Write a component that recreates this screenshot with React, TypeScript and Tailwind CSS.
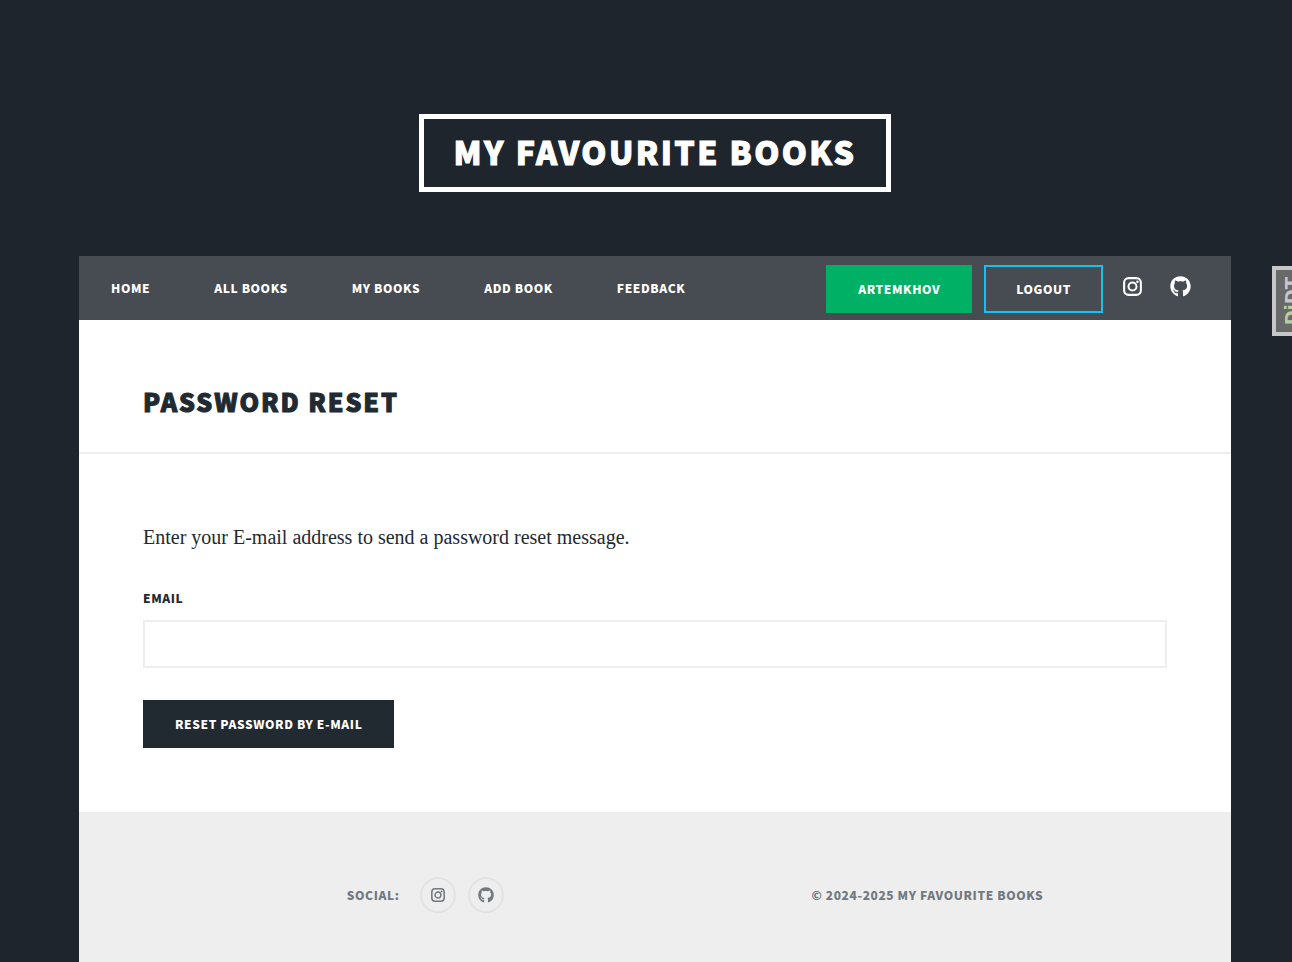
import { FaGithub } from "react-icons/fa";

const face = "font-['Noto_Sans_CJK_SC',sans-serif] font-black uppercase";
const heading = `${face} tracking-[0.075em] [-webkit-text-stroke:1px_currentColor]`;
const small = `${face} text-[12px] tracking-[0.05em]`;

const links = ["Home", "All books", "My books", "Add book", "Feedback"];

function Instagram({ className }: { className: string }) {
  return (
    <svg viewBox="0 0 20 20" className={className} fill="none" stroke="currentColor" aria-hidden="true">
      <rect x="1.2" y="1.2" width="17.6" height="17.6" rx="4.6" strokeWidth="2.2" />
      <circle cx="10" cy="10" r="4.2" strokeWidth="2.1" />
      <circle cx="15.2" cy="4.9" r="1.3" fill="currentColor" stroke="none" />
    </svg>
  );
}

export default function App() {
  return (
    <div className="relative min-h-screen overflow-x-hidden bg-[#1e252d] pr-[61px] pl-[79px] font-['Liberation_Serif',serif] text-[#212931]">
      <header className="flex justify-center pt-[114px] pb-16">
        <a
          href="#"
          className={`${heading} flex h-[78px] items-center border-[5px] border-white px-[30px] pb-1 text-[32px] leading-none text-white`}
        >
          My favourite books
        </a>
      </header>

      <nav className="flex h-16 items-center justify-between bg-[#474b52] text-white" aria-label="Main">
        <ul className="flex">
          {links.map((link) => (
            <li key={link}>
              <a href="#" className={`${small} block px-8 leading-16`}>
                {link}
              </a>
            </li>
          ))}
        </ul>
        <div className="flex items-center gap-3 pt-0.5 pr-10">
          <a href="#" className={`${small} flex h-12 items-center bg-[#00b064] px-8`}>
            ArtemKhov
          </a>
          <button type="button" className={`${small} h-12 border-2 border-[#18bfef] px-[30px]`}>
            Logout
          </button>
          <div className="flex items-center gap-7 pb-1.5 pl-2">
            <a href="#" aria-label="Instagram">
              <Instagram className="size-[19px]" />
            </a>
            <a href="#" aria-label="GitHub">
              <FaGithub size={21} />
            </a>
          </div>
        </div>
      </nav>

      <main className="bg-white">
        <div className="border-b-2 border-[#eeeeee] px-16 pt-[63px] pb-[33px]">
          <h1 className={`${heading} text-[25px] leading-9`}>Password reset</h1>
        </div>
        <form className="px-16 pt-16 pb-16" onSubmit={(event) => event.preventDefault()}>
          <p className="text-[20px] leading-[38px]">Enter your E-mail address to send a password reset message.</p>
          <label htmlFor="email" className={`${small} mt-[30px] block leading-6`}>
            Email
          </label>
          <input
            id="email"
            type="email"
            className="mt-2.5 block h-12 w-full border-2 border-[#eeeeee] bg-white px-4 outline-none"
          />
          <button type="submit" className={`${small} mt-8 block h-12 bg-[#212931] px-8 text-white`}>
            Reset password by e-mail
          </button>
        </form>
      </main>

      <footer
        className={`${small} flex h-[166px] items-center justify-center gap-77 bg-[#eeeeee] pl-20 text-[#717981]`}
      >
        <div className="flex items-center gap-5">
          <span>Social:</span>
          <div className="flex gap-3">
            <a
              href="#"
              aria-label="Instagram"
              className="flex size-9 items-center justify-center rounded-full border-2 border-[#e2e3e4]"
            >
              <Instagram className="size-3.5" />
            </a>
            <a
              href="#"
              aria-label="GitHub"
              className="flex size-9 items-center justify-center rounded-full border-2 border-[#e2e3e4]"
            >
              <FaGithub size={16} />
            </a>
          </div>
        </div>
        <div>© 2024-2025 My favourite books</div>
      </footer>

      <button
        type="button"
        aria-label="Show toolbar"
        className="absolute top-[266px] right-0 flex h-[70px] w-5 items-center overflow-hidden border-4 border-r-0 border-[#c7c7c7] bg-[#696969] pl-1"
      >
        <span className="shrink-0 rotate-180 font-['DejaVu_Sans',sans-serif] text-[18px] leading-6 font-bold text-[#c7c7c7] [writing-mode:vertical-rl]">
          <span className="text-[#b5cf9e]">Dj</span>DT
        </span>
      </button>
    </div>
  );
}
